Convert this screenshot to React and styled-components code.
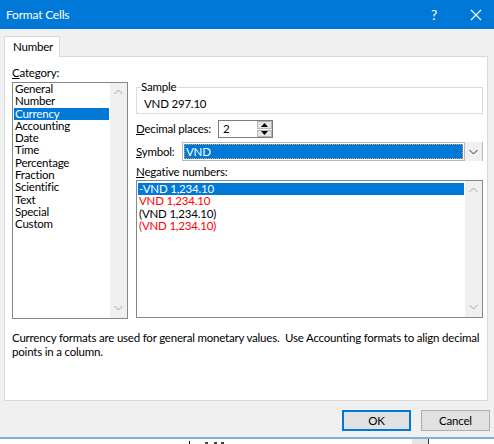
import React from "react";
import styled, { createGlobalStyle } from "styled-components";

const GlobalStyle = createGlobalStyle`
  html, body {
    margin: 0;
    padding: 0;
    width: 494px;
    height: 444px;
    overflow: hidden;
    background: #ffffff;
  }
  body {
    font-family: "Segoe UI", Lato, "Noto Sans", sans-serif;
    font-size: 11.5px;
    letter-spacing: -0.2px;
    color: #000;
  }
`;

const categories = [
  "General",
  "Number",
  "Currency",
  "Accounting",
  "Date",
  "Time",
  "Percentage",
  "Fraction",
  "Scientific",
  "Text",
  "Special",
  "Custom",
];

const negatives = [
  { text: "-VND 1,234.10", red: false },
  { text: "VND 1,234.10", red: true },
  { text: "(VND 1,234.10)", red: false },
  { text: "(VND 1,234.10)", red: true },
];

function Chevron({ up }) {
  return (
    <svg width="9" height="6" viewBox="0 0 9 6">
      <path
        d={up ? "M0.5 5 L4.5 1 L8.5 5" : "M0.5 1 L4.5 5 L8.5 1"}
        fill="none"
        stroke={up === undefined ? "#333" : "#a6a6a6"}
        strokeWidth="1"
      />
    </svg>
  );
}

function ScrollBar() {
  return (
    <Track>
      <Chevron up />
      <Chevron up={false} />
    </Track>
  );
}

function App() {
  return (
    <Window>
      <GlobalStyle />
      <TitleBar>
        <Title>Format Cells</Title>
        <TitleButtons>
          <HelpGlyph>?</HelpGlyph>
          <svg width="12" height="12" viewBox="0 0 12 12">
            <path d="M1 1 L11 11 M11 1 L1 11" stroke="#fff" strokeWidth="1.2" />
          </svg>
        </TitleButtons>
      </TitleBar>
      <Body>
        <TabStrip>
          <Tab>Number</Tab>
        </TabStrip>
        <Panel>
          <Columns>
            <LeftColumn>
              <FieldLabel>
                <u>C</u>ategory:
              </FieldLabel>
              <ListBox $height={237}>
                <ListItems $inset={0}>
                  {categories.map((c) => (
                    <Item key={c} $selected={c === "Currency"}>
                      {c}
                    </Item>
                  ))}
                </ListItems>
                <ScrollBar />
              </ListBox>
            </LeftColumn>
            <RightColumn>
              <GroupBox>
                <GroupLegend>Sample</GroupLegend>
                <SampleValue>VND 297.10</SampleValue>
              </GroupBox>
              <FieldRow>
                <RowLabel $width={82}>
                  <u>D</u>ecimal places:
                </RowLabel>
                <SpinBox>
                  <SpinValue>2</SpinValue>
                  <Spinner>
                    <SpinButton>
                      <svg width="7" height="4" viewBox="0 0 7 4">
                        <path d="M3.5 0 L7 4 L0 4 Z" fill="#000" />
                      </svg>
                    </SpinButton>
                    <SpinButton>
                      <svg width="7" height="4" viewBox="0 0 7 4">
                        <path d="M0 0 L7 0 L3.5 4 Z" fill="#000" />
                      </svg>
                    </SpinButton>
                  </Spinner>
                </SpinBox>
              </FieldRow>
              <FieldRow $top={4}>
                <RowLabel $width={46}>
                  <u>S</u>ymbol:
                </RowLabel>
                <ComboBox>
                  <ComboValue>VND</ComboValue>
                  <ComboArrow>
                    <Chevron />
                  </ComboArrow>
                </ComboBox>
              </FieldRow>
              <FieldLabel $top={3} $bottom={0}>
                <u>N</u>egative numbers:
              </FieldLabel>
              <ListBox $height={138}>
                <ListItems $inset={2}>
                  {negatives.map((n, i) => (
                    <Item key={i} $selected={i === 0} $red={n.red}>
                      {n.text}
                    </Item>
                  ))}
                </ListItems>
                <ScrollBar />
              </ListBox>
            </RightColumn>
          </Columns>
          <Description>
            Currency formats are used for general monetary values.&nbsp; Use
            Accounting formats to align decimal points in a column.
          </Description>
        </Panel>
        <ButtonRow>
          <DialogButton $default>OK</DialogButton>
          <DialogButton>Cancel</DialogButton>
        </ButtonRow>
      </Body>
      <Backdrop>
        <Caret />
        <Mark $left={205} />
        <Mark $left={214} />
        <Mark $left={221} />
        <Cell />
      </Backdrop>
    </Window>
  );
}

const Window = styled.div`
  width: 494px;
  height: 444px;
  display: flex;
  flex-direction: column;
  overflow: hidden;
`;

const TitleBar = styled.div`
  height: 29px;
  flex: none;
  background: #0078d7;
  display: flex;
  align-items: center;
  justify-content: space-between;
  padding: 0 12px 0 6px;
  color: #fff;
`;

const Title = styled.div`
  font-size: 12px;
  line-height: 16px;
  white-space: nowrap;
`;

const TitleButtons = styled.div`
  display: flex;
  align-items: center;
  gap: 33px;
`;

const HelpGlyph = styled.span`
  font-size: 14px;
  line-height: 16px;
`;

const Body = styled.div`
  flex: none;
  height: 408px;
  background: #f0f0f0;
  padding: 7px 6px 0 4px;
  box-sizing: border-box;
  display: flex;
  flex-direction: column;
`;

const TabStrip = styled.div`
  display: flex;
  position: relative;
  z-index: 1;
  margin-bottom: -1px;
`;

const Tab = styled.div`
  width: 56px;
  height: 21px;
  box-sizing: border-box;
  border: 1px solid #d9d9d9;
  border-bottom: none;
  background: #fff;
  padding-left: 8px;
  line-height: 20px;
`;

const Panel = styled.div`
  height: 345px;
  box-sizing: border-box;
  background: #fff;
  border: 1px solid #d9d9d9;
  padding: 8px 4px 0 7px;
  display: flex;
  flex-direction: column;
`;

const Columns = styled.div`
  display: flex;
  gap: 8px;
`;

const LeftColumn = styled.div`
  width: 116px;
  display: flex;
  flex-direction: column;
`;

const RightColumn = styled.div`
  flex: 1;
  display: flex;
  flex-direction: column;
  padding-top: 15px;
`;

const FieldLabel = styled.div`
  line-height: 16px;
  white-space: nowrap;
  margin-top: ${(p) => p.$top || 0}px;
  margin-bottom: ${(p) => p.$bottom ?? 1}px;
`;

const ListBox = styled.div`
  height: ${(p) => p.$height}px;
  box-sizing: border-box;
  border: 1px solid #828790;
  display: flex;
`;

const ListItems = styled.div`
  flex: 1;
  padding: 1px;
  padding-top: ${(p) => p.$inset}px;
`;

const Item = styled.div`
  line-height: 12.3px;
  height: 12.3px;
  padding-left: 1px;
  white-space: nowrap;
  background: ${(p) => (p.$selected ? "#0078d7" : "transparent")};
  color: ${(p) => (p.$selected ? "#fff" : p.$red ? "#ff0000" : "#000")};
`;

const Track = styled.div`
  width: 17px;
  background: #f0f0f0;
  display: flex;
  flex-direction: column;
  align-items: center;
  justify-content: space-between;
  padding: 6px 0 7px;
`;

const GroupBox = styled.fieldset`
  margin: 0;
  height: 34px;
  box-sizing: border-box;
  border: 1px solid #dcdcdc;
  padding: 0 0 0 7px;
`;

const GroupLegend = styled.legend`
  padding: 0 2px 0 0;
  margin-left: -3px;
  line-height: 14px;
`;

const SampleValue = styled.div`
  line-height: 16px;
  margin-top: 2px;
  white-space: nowrap;
`;

const FieldRow = styled.div`
  display: flex;
  align-items: center;
  margin-top: ${(p) => p.$top ?? 6}px;
`;

const RowLabel = styled.div`
  width: ${(p) => p.$width}px;
  line-height: 16px;
  white-space: nowrap;
  flex: none;
`;

const SpinBox = styled.div`
  width: 55px;
  height: 18px;
  box-sizing: border-box;
  border: 1px solid #7a7a7a;
  display: flex;
  background: #fff;
`;

const SpinValue = styled.div`
  flex: 1;
  padding-left: 4px;
  line-height: 16px;
`;

const Spinner = styled.div`
  width: 15px;
  display: flex;
  flex-direction: column;
  gap: 1px;
`;

const SpinButton = styled.div`
  flex: 1;
  background: #e5e5e5;
  border: 1px solid #b5b5b5;
  display: flex;
  align-items: center;
  justify-content: center;
`;

const ComboBox = styled.div`
  flex: 1;
  height: 19px;
  box-sizing: border-box;
  border: 1px solid #b9b9b9;
  display: flex;
  padding: 1px 0 1px 1px;
  background: #fff;
`;

const ComboValue = styled.div`
  flex: 1;
  background: #0078d7;
  color: #fff;
  line-height: 15px;
  padding-left: 2px;
  outline: 1px dotted #e0a060;
  outline-offset: -1px;
`;

const ComboArrow = styled.div`
  width: 17px;
  margin: -2px 0 -2px 1px;
  border-left: 1px solid #b9b9b9;
  background: #f0f0f0;
  display: flex;
  align-items: center;
  justify-content: center;
`;

const Description = styled.div`
  margin-top: 12px;
  line-height: 13.5px;
  padding-right: 2px;
`;

const ButtonRow = styled.div`
  display: flex;
  justify-content: flex-end;
  gap: 10px;
  padding-top: 9px;
  margin-right: -2px;
`;

const DialogButton = styled.div`
  width: 69px;
  height: 21px;
  box-sizing: border-box;
  border: 1px solid ${(p) => (p.$default ? "#0078d7" : "#adadad")};
  box-shadow: ${(p) => (p.$default ? "inset 0 0 0 1px #0078d7" : "none")};
  background: #e1e1e1;
  display: flex;
  align-items: center;
  justify-content: center;
  line-height: 16px;
`;

const Backdrop = styled.div`
  flex: 1;
  border-top: 2px solid #7ab2e0;
  background: #fff;
  position: relative;
`;

const Caret = styled.div`
  position: absolute;
  left: 189px;
  top: 2px;
  width: 1px;
  height: 10px;
  background: #000;
`;

const Mark = styled.div`
  position: absolute;
  left: ${(p) => p.$left}px;
  top: 3px;
  width: 3px;
  height: 3px;
  background: #444;
`;

const Cell = styled.div`
  position: absolute;
  left: 412px;
  top: 0;
  width: 16px;
  height: 10px;
  background: #e6e6e6;
  border-right: 1px solid #333;
`;

export default App;
